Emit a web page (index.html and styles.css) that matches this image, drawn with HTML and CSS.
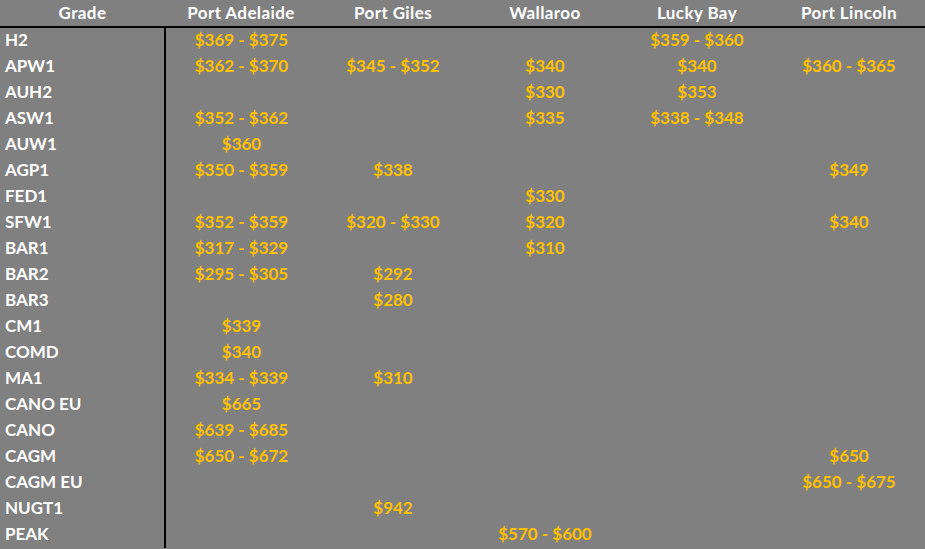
FILE: index.html
```html
<!DOCTYPE html>
<html>
<head>
<meta charset="utf-8">
<link rel="stylesheet" href="styles.css">
</head>
<body>
<table class="prices">
  <colgroup>
    <col class="c-grade">
    <col><col><col><col><col>
  </colgroup>
  <thead>
    <tr><th>Grade</th><th>Port Adelaide</th><th>Port Giles</th><th>Wallaroo</th><th>Lucky Bay</th><th>Port Lincoln</th></tr>
  </thead>
  <tbody>
    <tr><td>H2</td><td>$369 - $375</td><td></td><td></td><td>$359 - $360</td><td></td></tr>
    <tr><td>APW1</td><td>$362 - $370</td><td>$345 - $352</td><td>$340</td><td>$340</td><td>$360 - $365</td></tr>
    <tr><td>AUH2</td><td></td><td></td><td>$330</td><td>$353</td><td></td></tr>
    <tr><td>ASW1</td><td>$352 - $362</td><td></td><td>$335</td><td>$338 - $348</td><td></td></tr>
    <tr><td>AUW1</td><td>$360</td><td></td><td></td><td></td><td></td></tr>
    <tr><td>AGP1</td><td>$350 - $359</td><td>$338</td><td></td><td></td><td>$349</td></tr>
    <tr><td>FED1</td><td></td><td></td><td>$330</td><td></td><td></td></tr>
    <tr><td>SFW1</td><td>$352 - $359</td><td>$320 - $330</td><td>$320</td><td></td><td>$340</td></tr>
    <tr><td>BAR1</td><td>$317 - $329</td><td></td><td>$310</td><td></td><td></td></tr>
    <tr><td>BAR2</td><td>$295 - $305</td><td>$292</td><td></td><td></td><td></td></tr>
    <tr><td>BAR3</td><td></td><td>$280</td><td></td><td></td><td></td></tr>
    <tr><td>CM1</td><td>$339</td><td></td><td></td><td></td><td></td></tr>
    <tr><td>COMD</td><td>$340</td><td></td><td></td><td></td><td></td></tr>
    <tr><td>MA1</td><td>$334 - $339</td><td>$310</td><td></td><td></td><td></td></tr>
    <tr><td>CANO EU</td><td>$665</td><td></td><td></td><td></td><td></td></tr>
    <tr><td>CANO</td><td>$639 - $685</td><td></td><td></td><td></td><td></td></tr>
    <tr><td>CAGM</td><td>$650 - $672</td><td></td><td></td><td></td><td>$650</td></tr>
    <tr><td>CAGM EU</td><td></td><td></td><td></td><td></td><td>$650 - $675</td></tr>
    <tr><td>NUGT1</td><td></td><td>$942</td><td></td><td></td><td></td></tr>
    <tr><td>PEAK</td><td></td><td></td><td>$570 - $600</td><td></td><td></td></tr>
  </tbody>
</table>
</body>
</html>
```
FILE: styles.css
```css
html, body {
  margin: 0;
  padding: 0;
  background: #808080;
}
.prices {
  width: 925px;
  table-layout: fixed;
  border-collapse: collapse;
  font-family: Lato, "Open Sans", sans-serif;
  font-weight: 700;
  font-size: 17px;
}
.prices col.c-grade {
  width: 165px;
}
.prices th {
  height: 24px;
  padding: 0 0 2px;
  color: #ffffff;
  text-align: center;
  letter-spacing: 0.4px;
  border-bottom: 2px solid #000000;
  vertical-align: middle;
}
.prices td {
  height: 22px;
  padding: 0 0 4px;
  text-align: center;
  color: #ffc000;
  vertical-align: middle;
}
.prices td:first-child {
  text-align: left;
  padding-left: 5px;
  color: #ffffff;
  border-right: 2px solid #000000;
}
```
